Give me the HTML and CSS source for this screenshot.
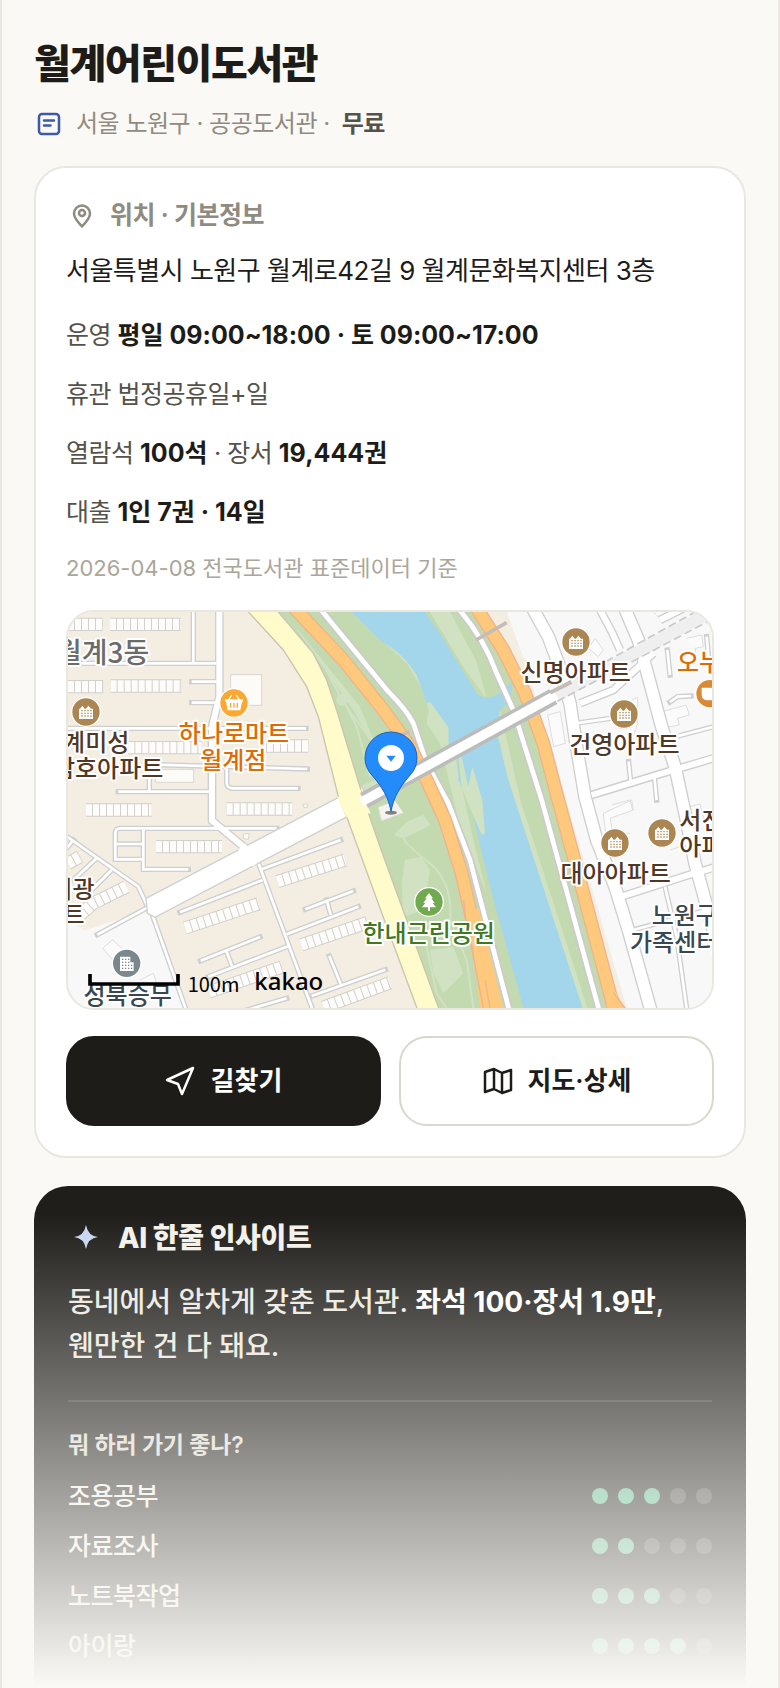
FILE: index.html
```html
<!DOCTYPE html>
<html lang="ko">
<head>
<meta charset="utf-8">
<meta name="viewport" content="width=device-width, initial-scale=1">
<title>월계어린이도서관</title>
<link rel="stylesheet" href="styles.css">
</head>
<body>
<main class="page">
  <header class="head">
    <h1>월계어린이도서관</h1>
    <p class="sub">
      <svg class="ico ico-type" viewBox="0 0 30 30" aria-hidden="true"><rect x="5" y="5" width="20" height="20" rx="3"/><path d="M10 11.500h10M10 16.500h6.500"/></svg>
      <span>서울 노원구 · 공공도서관 ·</span>
      <b>무료</b>
    </p>
  </header>

  <section class="card">
    <h2 class="card-title">
      <svg class="ico" viewBox="0 0 32 32" aria-hidden="true"><path d="M16 27.500c-3.500-4-8-8-8-13a8 8 0 0 1 16 0c0 5-4.500 9-8 13z"/><circle cx="16" cy="14" r="3"/></svg>
      위치 · 기본정보
    </h2>
    <p class="addr">서울특별시 노원구 월계로42길 9 월계문화복지센터 3층</p>
    <ul class="facts">
      <li>운영 <b>평일 09:00~18:00 · 토 09:00~17:00</b></li>
      <li>휴관 법정공휴일+일</li>
      <li>열람석 <b>100석</b> · 장서 <b>19,444권</b></li>
      <li>대출 <b>1인 7권 · 14일</b></li>
    </ul>
    <p class="source">2026-04-08 전국도서관 표준데이터 기준</p>

    <div class="map">
      <svg viewBox="24 36 1932 1188" preserveAspectRatio="xMidYMid slice" role="img" aria-label="월계어린이도서관 위치 지도">
        <defs>
          <g id="lanes">
            <path d="M0 190H470M400 20V190M395 245H470M395 308H468M0 385H738M260 493L742 507M175 575H450M268 520V575M500 505V550Q502 565 520 565H714"/>
            <path d="M650 685H180Q166 685 166 700V778H250M166 732H250M250 690V808H385M0 695L235 860L265 925M110 775L40 840M155 810L95 870M40 720L20 745M268 920L112 1004"/>
            <path d="M605 808L842 720M360 937L608 840M680 1003L895 920M736 928L880 873M800 900L812 945M422 1082L600 1011M500 1055L516 1098M445 1130L686 1038M755 1188L976 1109M808 1068L842 1152M540 1236L680 1195M272 930L382 1240M590 775L762 1240"/>
            <path d="M1545 370L1690 350M1830 306L1853 290L1893 288M1783 530L1790 600M1706 485L1712 545M1822 150L1830 225M1830 415L1960 380M1700 995L1800 968L1960 925M1815 860L1850 1010L1882 1240M1940 110L1948 200"/>
          </g>
          <g id="streets">
            <path d="M478 20V290L456 380V662L560 748"/>
            <path d="M1615 20L1655 95L1680 150M1560 310L1660 270L1780 160M1595 585L1790 525L1960 475M1675 893L1880 827L1960 803M1880 20L1800 60"/>
          </g>
          <g id="avenues">
            <path d="M1415 20L1465 110L1495 190L1530 310L1548 430L1575 590L1610 720L1665 860L1705 990L1775 1240"/>
            <path d="M1692 20L1735 120L1762 220L1805 380L1845 500L1875 640L1905 790L1960 990"/>
          </g>
          <g id="rows">
            <path d="M24 73H128M150 73H362M24 260H130M152 258H364M205 443H425M600 438H745M78 630H275M500 627H697M288 740H486"/>
            <path d="M652 845L856 780M375 984L596 911M723 1035L922 968M447 1176L665 1101M790 1222L990 1148M60 945L100 910L200 860M24 790L60 770"/>
          </g>
          <g id="apt">
            <circle r="43" class="poi-ring"/>
            <path fill="#fff" d="M-21-10h3l7-9 7 9 4 0 7-9 8 9h6v31h-42z"/>
            <path class="windows" d="M-14-4h32M-14 4h32M-14 12h32"/>
          </g>
        </defs>

        <rect x="24" y="36" width="1932" height="1188" fill="#f3ede2"/>
        <path fill="#f8f8f8" d="M24 955L72 992L262 930L375 1224H24zM1340 36L1400 200L1490 500L1700 1224H1960V36z"/>

        <!-- east side blocks -->
        <g class="outline">
          <path d="M1585 145l20-30 25 35-15 20zM1463 345l38-10 15 95-35 10zM1715 300l18-8v80l-15 40M1880 115l45-10 5 35-25 5 5 30M1808 335l70-20 10 30-35 10 5 20-45 8zM1655 615l55-15 8 30M1630 640l85-40 5 30-70 25 10 50-22 5zM1890 620l30-8 15 60M1780 36l20 20 30-20M1650 700h60M1830 750l30-10"/>
          <path d="M128 1045l30-26 42 40-25 40zM240 1140l40-20 10 30"/>
        </g>

        <use href="#lanes" class="lane-edge"/>
        <use href="#streets" class="street-edge"/>
        <use href="#avenues" class="avenue-edge"/>
        <use href="#lanes" class="lane"/>
        <use href="#streets" class="street"/>
        <use href="#avenues" class="avenue"/>

        <path class="bldg" d="M512 224h93v92h-93zM286 508h115v39h-115zM550 703l18-3-3 18-14-2zM730 612h12v10h-12z"/>
        <use href="#rows" class="row-edge"/>
        <use href="#rows" class="row"/>

        <!-- riverside park -->
        <path fill="#c3dab0" d="M655 36L760 160L830 330L900 580L960 740L1135 1224H1665L1490 560L1400 290L1255 36z"/>
        <path fill="#d0e2c2" d="M690 60L900 320L1010 590L930 610L900 560L985 520L880 330zM1040 665l50-20 22 30-80 40-30-10zM1035 780l50-10 25 40-20 120-60 20-5-100zM1110 1050l70-10 30 80-60 60-30-60zM940 36l60 90L1070 225L1100 290L1040 190L880 40z"/>
        <path fill="#d0e2c2" d="M1165 380l-55-70-10 60 40 60 60 250 80 200-40-160zM1110 36l110 180 60 80-30-110L1170 36z"/>
        <path fill="none" stroke="#d0e2c2" stroke-width="6" d="M845 300L800 210M850 300L890 380L930 530M845 300L940 430M1015 690L1040 730Q1070 760 1110 790Q1180 850 1170 960M1095 1020L1130 1180L1160 1224M1170 960L1220 1080L1240 1224"/>
        <circle cx="846" cy="300" r="17" fill="#d0e2c2"/>

        <path fill="#a3d6ea" d="M875 36L960 120Q1035 165 1070 225L1100 310L1165 382V440L1195 465V540L1230 610L1290 860L1390 1224H1568L1460 860L1375 600L1335 500L1312 400L1320 330L1350 305L1358 245L1310 285Q1280 300 1255 285L1220 230L1140 100L1095 36z"/>
        <path fill="#d0e2c2" d="M1100 310l10-5 55 77v70l-20-5zM1195 465l10 5 20 90 12-60 30 100 8 100-10 5-60-140zM1320 330l-8 70 33 140 130 400 93 284h14l-200-620z"/>

        <path class="park-edge" d="M775 20L985 275Q1040 330 1060 370L1100 490L1165 610L1230 780L1350 1240M1190 20Q1270 110 1310 220L1360 330L1445 600L1620 1240"/>
        <path class="park-way" d="M775 20L985 275Q1040 330 1060 370L1100 490L1165 610L1230 780L1350 1240M1190 20Q1270 110 1310 220L1360 330L1445 600L1620 1240"/>

        <!-- expressways -->
        <path class="express-edge" d="M700 20L850 180L970 330L1050 440L1100 540L1155 660L1205 820L1230 930L1265 1080L1305 1240M1247 20L1330 150L1395 280L1450 430L1492 590L1570 880L1655 1200L1662 1240"/>
        <path class="express" d="M700 20L850 180L970 330L1050 440L1100 540L1155 660L1205 820L1230 930L1265 1080L1305 1240M1247 20L1330 150L1395 280L1450 430L1492 590L1570 880L1655 1200L1662 1240"/>
        <path fill="#fec97d" d="M1225 920L1260 1224H1330L1258 930zM1640 1130L1695 1224H1640z"/>
        <path fill="none" stroke="#f0b28a" stroke-width="4" d="M1211 900L1218 960L1270 1224M1275 1140L1290 1224M1660 1178L1695 1224"/>
        <path fill="none" stroke="#c5bcb7" stroke-width="11" d="M1248 120L1340 68M1010 410L1048 395"/>

        <!-- main roads -->
        <path fill="#fff" stroke="#cfcfcf" stroke-width="4" d="M258 895L840 590L905 560L925 600L862 650L285 952L262 940z"/>
        <path fill="none" stroke="#fff" stroke-width="28" d="M545 740L590 790"/>
        <path fill="#fffbca" stroke="#cbc4ae" stroke-width="4" d="M560 30L670 150L740 260L775 350L835 590L860 650L975 965L1073 1230H1138L960 740L915 610L860 430L830 330L800 240L760 160L650 30z"/>
        <path fill="#fffbca" d="M832 592L859 652L932 640L902 570z"/>
        <path fill="none" stroke="#bcbcbc" stroke-width="50" d="M912 601L1480 290"/>
        <path fill="none" stroke="#fff" stroke-width="28" d="M904 606L1490 284"/>
        <path fill="none" stroke="#efefef" stroke-width="36" d="M1490 288L1930 48"/>
        <path class="tunnel" d="M1480 272L1920 28M1492 304L1956 58"/>
        <path fill="none" stroke="#c5bcb7" stroke-width="12" d="M1470 278L1534 246"/>
        <path fill="#f6f3ee" stroke="#ddd" stroke-width="2" d="M955 622l50-20 25 36-65 24z"/>

        <!-- places -->
        <use href="#apt" x="78" y="336" fill="#ab8652"/>
        <use href="#apt" x="1548" y="126" fill="#ab8652"/>
        <use href="#apt" x="1692" y="342" fill="#ab8652"/>
        <use href="#apt" x="1665" y="729" fill="#ab8652"/>
        <use href="#apt" x="1806" y="699" fill="#ab8652"/>
        <g transform="translate(522 309)">
          <circle r="43" class="poi-ring" fill="#fba833"/>
          <path fill="#fff" d="M-27-11h54v7h-3l-5 26h-38l-5-26h-3z"/>
          <path fill="none" stroke="#fff" stroke-width="4" d="M-17-8l10-16M17-8L7-24"/>
          <path fill="none" stroke="#fba833" stroke-width="4" d="M-10 0v14M0 0v14M10 0v14"/>
        </g>
        <g transform="translate(1107 906)">
          <circle r="43" class="poi-ring" fill="#71aa4e"/>
          <path fill="#fff" d="M0-27l12 16h-5l10 14h-6l10 13H3v11h-6V16h-18l10-13h-6l10-14h-5z"/>
        </g>
        <g transform="translate(200 1090)">
          <circle r="43" class="poi-ring" fill="#7a878d"/>
          <path fill="#fff" d="M-20-20h31v17h10v26h-41z"/>
          <path fill="none" stroke="#7a878d" stroke-width="4" stroke-dasharray="4 5" d="M-14-12h22M-14-3h22M-14 6h32M-14 15h32"/>
        </g>
        <g transform="translate(1950 281)">
          <circle r="43" class="poi-ring" fill="#d98a35"/>
          <path fill="#fff" d="M-25-18h44v20q0 18-18 18h-8q-18 0-18-18z"/>
        </g>

        <g class="labels">
          <text class="dong" x="268" y="190" text-anchor="end">월계3동</text>
          <g class="home">
            <text x="208" y="452" text-anchor="end">월계미성</text>
            <text x="310" y="532" text-anchor="end">삼호아파트</text>
            <text x="104" y="894" text-anchor="end">미광</text>
            <text x="74" y="968" text-anchor="end">아파트</text>
            <text x="1547" y="242" text-anchor="middle">신명아파트</text>
            <text x="1693" y="460" text-anchor="middle">건영아파트</text>
            <text x="1667" y="845" text-anchor="middle">대아아파트</text>
            <text x="1858" y="687">서진</text>
            <text x="1858" y="764">아파트</text>
          </g>
          <g class="shop">
            <text x="522" y="427" text-anchor="middle">하나로마트</text>
            <text x="520" y="507" text-anchor="middle">월계점</text>
            <text x="1851" y="213">오누이</text>
          </g>
          <g class="office">
            <text x="1775" y="972">노원구</text>
            <text x="1710" y="1052">가족센터</text>
            <text x="203" y="1212" text-anchor="middle">성북승무</text>
          </g>
          <text class="park" x="1106" y="1025" text-anchor="middle">한내근린공원</text>
        </g>

        <!-- marker -->
        <ellipse cx="993" cy="638" rx="18" ry="6" fill="#333" opacity=".6"/>
        <path fill="#238cfa" stroke="#1b62c4" stroke-width="3" d="M993 634C985 590 965 560 938 528Q915 504 915 474A78 78 0 0 1 1071 474Q1071 504 1048 528C1021 560 1001 590 993 634z"/>
        <circle cx="993" cy="474" r="39" fill="#fff"/>
        <path fill="#238cfa" d="M979 467h28l-14 18z"/>

        <path fill="none" stroke="#000" stroke-width="11" d="M90 1122V1152H354V1122"/>
        <text class="scale" x="383" y="1176">100m</text>
        <text class="brand" x="583" y="1170">kakao</text>
      </svg>
    </div>

    <div class="actions">
      <button type="button" class="btn btn-dark">
        <svg class="ico" viewBox="0 0 32 32" aria-hidden="true"><path d="M28 3L2 15l11 4 4 10z"/></svg>
        길찾기
      </button>
      <button type="button" class="btn">
        <svg class="ico" viewBox="0 0 32 32" aria-hidden="true"><path d="M3 7l9-3 8 4 9-3v20l-9 3-8-4-9 3zM12 4v20M20 8v20"/></svg>
        지도·상세
      </button>
    </div>
  </section>

  <section class="insight">
    <h2 class="insight-title">
      <svg class="spark" viewBox="0 0 36 36" aria-hidden="true"><path d="M18 5q2 11 12 12-10 1-12 12-2-11-12-12 10-1 12-12z"/></svg>
      AI 한줄 인사이트
    </h2>
    <p class="insight-text">동네에서 알차게 갖춘 도서관. <b>좌석 100·장서 1.9만</b>, 웬만한 건 다 돼요.</p>
    <h3>뭐 하러 가기 좋나?</h3>
    <ul class="scores">
      <li>조용공부 <span class="dots" role="img" aria-label="5점 중 3점"><i class="on"></i><i class="on"></i><i class="on"></i><i></i><i></i></span></li>
      <li>자료조사 <span class="dots" role="img" aria-label="5점 중 2점"><i class="on"></i><i class="on"></i><i></i><i></i><i></i></span></li>
      <li>노트북작업 <span class="dots" role="img" aria-label="5점 중 3점"><i class="on"></i><i class="on"></i><i class="on"></i><i></i><i></i></span></li>
      <li>아이랑 <span class="dots" role="img" aria-label="5점 중 4점"><i class="on"></i><i class="on"></i><i class="on"></i><i class="on"></i><i></i></span></li>
    </ul>
  </section>
</main>
</body>
</html>
```
FILE: styles.css
```css
* { box-sizing: border-box; margin: 0; padding: 0; }

body {
  background: #faf9f5;
  color: #1d1c18;
  font-family: Inter, "Noto Sans CJK KR", sans-serif;
  font-size: 25px;
  letter-spacing: -.02em;
  word-break: keep-all;
}
ul { list-style: none; }

.page {
  min-height: 100vh;
  padding: 38px 32px 0;
  border: solid #e9e7e0;
  border-width: 0 2px;
  overflow: hidden;
}

.head h1 { font-size: 40px; line-height: 52px; font-weight: 800; letter-spacing: -.035em; }
.sub {
  display: flex;
  align-items: center;
  gap: 12px;
  margin: 17px 0 25px;
  font-size: 24px;
  line-height: 34px;
  color: #8f8b80;
}
.sub b { font-weight: 600; color: #55524a; }

.ico {
  flex: none;
  width: 32px;
  height: 32px;
  fill: none;
  stroke: currentColor;
  stroke-width: 2.5;
  stroke-linecap: round;
  stroke-linejoin: round;
}
.ico-type { width: 30px; height: 30px; color: #3d5aa9; }

/* location card */
.card {
  padding: 30px;
  background: #fff;
  border: 2px solid #e9e7e0;
  border-radius: 32px;
}
.card-title {
  display: flex;
  align-items: center;
  gap: 12px;
  font-size: 25px;
  line-height: 34px;
  font-weight: 600;
  color: #8f8b80;
}
.addr { margin-top: 18px; font-size: 26px; line-height: 42px; }
.facts {
  display: grid;
  gap: 16px;
  margin-top: 22px;
  line-height: 43px;
  color: #55524a;
}
.facts b { font-weight: 700; letter-spacing: 0; color: #1d1c18; }
.source { margin-top: 18px; font-size: 22px; line-height: 32px; letter-spacing: 0; color: #aaa69a; }

.map {
  margin-top: 26px;
  border: 2px solid #e9e7e0;
  border-radius: 28px;
  overflow: hidden;
}
.map svg { display: block; width: 100%; height: auto; }

.lane, .street, .avenue { fill: none; stroke: #fff; }
.lane-edge, .street-edge, .avenue-edge { fill: none; stroke: #cfcfcf; }
.lane { stroke-width: 8; }
.lane-edge { stroke-width: 16; stroke-linecap: square; }
.street { stroke-width: 18; }
.street-edge { stroke-width: 26; }
.avenue { stroke-width: 34; }
.avenue-edge { stroke-width: 42; }
.outline { fill: #fbfbfb; stroke: #ddd; stroke-width: 3; }
.bldg { fill: #fdfbf8; stroke: #d9d6d0; stroke-width: 3; }
.row { fill: none; stroke: #fdfcfa; stroke-width: 34; stroke-dasharray: 18 3; }
.row-edge { fill: none; stroke: #d2d0cc; stroke-width: 40; }
.park-edge { fill: none; stroke: #cbcbcb; stroke-width: 24; }
.park-way { fill: none; stroke: #fff; stroke-width: 14; }
.express-edge { fill: none; stroke: #f0b28a; stroke-width: 42; }
.express { fill: none; stroke: #fec97d; stroke-width: 34; }
.tunnel { fill: none; stroke: #c9c9c9; stroke-width: 5; stroke-dasharray: 24 12; }
.poi-ring { stroke: #fff; stroke-width: 4; }
.windows { fill: none; stroke: #ab8652; stroke-width: 4; stroke-dasharray: 4 5; }

.labels {
  font-family: "Noto Sans CJK KR", sans-serif;
  font-size: 72px;
  font-weight: 500;
  letter-spacing: 0;
  stroke: #fff;
  stroke-width: 12px;
  stroke-linejoin: round;
  paint-order: stroke;
}
.dong { font-size: 84px; fill: #6b6b6b; }
.home { fill: #503827; }
.shop { fill: #df6b04; }
.office { fill: #3a474f; }
.park { fill: #42781f; }
.scale { font-family: "Noto Sans CJK KR", sans-serif; font-size: 60px; letter-spacing: 0; }
.brand { font-family: "Noto Sans", sans-serif; font-size: 72px; font-weight: 500; letter-spacing: 0; }

.actions {
  display: grid;
  grid-template-columns: 1fr 1fr;
  gap: 18px;
  margin-top: 26px;
}
.btn {
  display: flex;
  align-items: center;
  justify-content: center;
  gap: 14px;
  height: 90px;
  border: 2px solid #dad8ce;
  border-radius: 28px;
  background: #fff;
  color: #1d1c18;
  font: 600 26px/36px Inter, "Noto Sans CJK KR", sans-serif;
}
.btn-dark { background: #1d1c18; border-color: #1d1c18; color: #fff; }

/* AI card, fades out into the page */
.insight {
  position: relative;
  margin-top: 28px;
  padding: 34px 34px 15px;
  background: #1f1e1a;
  border-radius: 34px 34px 0 0;
  color: #f3f1ea;
}
.insight::after {
  content: "";
  position: absolute;
  inset: 28px -34px 0;
  background: linear-gradient(rgba(250, 249, 245, 0), #faf9f5);
  pointer-events: none;
}
.insight-title {
  display: flex;
  align-items: center;
  gap: 14px;
  font-size: 28px;
  line-height: 36px;
  font-weight: 800;
  letter-spacing: -.01em;
}
.spark { flex: none; width: 36px; height: 36px; fill: #c9d5f2; }
.insight-text {
  margin-top: 24px;
  padding-bottom: 32px;
  border-bottom: 2px solid rgba(255, 255, 255, .12);
  font-size: 28px;
  line-height: 44px;
  font-weight: 500;
  letter-spacing: 0;
  color: #ece9e0;
}
.insight-text b { font-weight: 700; color: #fff; }
.insight h3 {
  margin-top: 28px;
  font-size: 23px;
  line-height: 30px;
  font-weight: 600;
  letter-spacing: -.01em;
  color: #dedacf;
}
.scores { margin-top: 11px; line-height: 50px; font-weight: 500; }
.scores li { display: flex; align-items: center; justify-content: space-between; }
.dots { display: flex; gap: 10px; }
.dots i { width: 16px; height: 16px; border-radius: 50%; background: rgba(255, 255, 255, .18); }
.dots .on { background: #5bb98c; }
```
